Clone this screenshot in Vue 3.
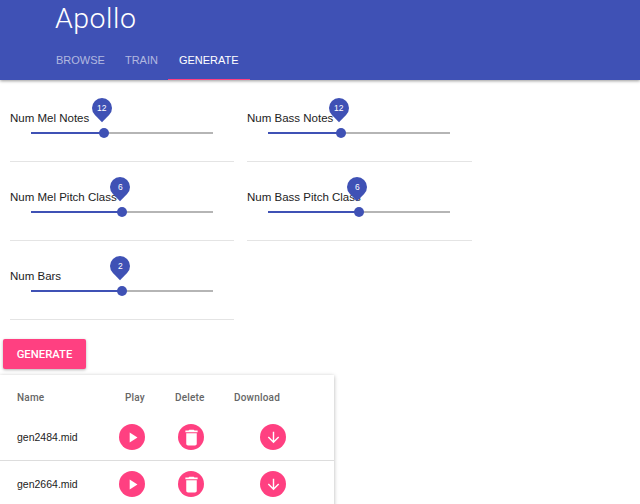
<script setup>
const sliders = [
  { label: 'Num Mel Notes', value: 12, pct: 40 },
  { label: 'Num Bass Notes', value: 12, pct: 40 },
  { label: 'Num Mel Pitch Class', value: 6, pct: 50 },
  { label: 'Num Bass Pitch Class', value: 6, pct: 50 },
  { label: 'Num Bars', value: 2, pct: 50 },
]
const tabs = [
  { name: 'BROWSE', active: false },
  { name: 'TRAIN', active: false },
  { name: 'GENERATE', active: true },
]
const files = ['gen2484.mid', 'gen2664.mid']
</script>

<template>
  <div class="page">
    <header class="bar">
      <h1 class="title">Apollo</h1>
      <nav class="tabs">
        <span v-for="t in tabs" :key="t.name" class="tab" :class="{ active: t.active }">{{ t.name }}</span>
      </nav>
    </header>

    <section class="grid">
      <div v-for="s in sliders" :key="s.label" class="cell">
        <div class="label">{{ s.label }}</div>
        <div class="track">
          <div class="fill" :style="{ width: s.pct + '%' }"></div>
          <div class="thumb" :style="{ left: s.pct + '%' }"></div>
          <div class="pin" :style="{ left: s.pct + '%' }"><span class="pin-text">{{ s.value }}</span></div>
        </div>
      </div>
    </section>

    <button class="generate">GENERATE</button>

    <section class="card">
      <div class="row head">
        <span class="c-name">Name</span>
        <span class="c-play">Play</span>
        <span class="c-del">Delete</span>
        <span class="c-dl">Download</span>
      </div>
      <div v-for="f in files" :key="f" class="row file">
        <span class="c-name fname">{{ f }}</span>
        <span class="c-play"><span class="fab">
          <svg viewBox="0 0 24 24" class="ico"><path d="M8 5v14l11-7z" /></svg>
        </span></span>
        <span class="c-del"><span class="fab">
          <svg viewBox="0 0 24 24" class="ico big"><path d="M6 19c0 1.1.9 2 2 2h8c1.1 0 2-.9 2-2V7H6v12zM19 4h-3.5l-1-1h-5l-1 1H5v2h14V4z" /></svg>
        </span></span>
        <span class="c-dl"><span class="fab">
          <svg viewBox="0 0 24 24" class="ico"><path d="M20 12l-1.41-1.41L13 16.17V4h-2v12.17l-5.58-5.59L4 12l8 8 8-8z" /></svg>
        </span></span>
      </div>
    </section>
  </div>
</template>

<style>
html, body { margin: 0; background: #fff; overflow: hidden; }
</style>

<style scoped>
.page {
  width: 640px;
  height: 504px;
  overflow: hidden;
  font-family: "Liberation Sans", Arial, sans-serif;
  color: #222;
}
.bar {
  height: 80px;
  box-sizing: border-box;
  background: #3f51b5;
  padding-left: 55px;
  box-shadow: 0 1px 3px rgba(0, 0, 0, 0.4);
  display: flex;
  flex-direction: column;
}
.title {
  margin: 0;
  height: 40px;
  font-family: Roboto, "Liberation Sans", sans-serif;
  font-size: 28.5px;
  font-weight: 300;
  line-height: 38px;
  color: #fff;
  letter-spacing: 0.5px;
}
.tabs {
  display: flex;
  margin-left: -9px;
  height: 40px;
}
.tab {
  padding: 0 10px;
  height: 40px;
  line-height: 41px;
  box-sizing: border-box;
  font-size: 11px;
  color: rgba(255, 255, 255, 0.6);
}
.tab.active {
  color: #fff;
  padding: 0 11px;
  border-bottom: 1px solid #ff4081;
}
.grid {
  display: grid;
  grid-template-columns: 224px 225px;
  column-gap: 13px;
  margin-left: 10px;
  padding-top: 3px;
}
.cell {
  height: 79px;
  box-sizing: border-box;
  border-bottom: 1px solid #e4e4e4;
  padding-top: 28px;
}
.label {
  font-size: 11.5px;
  line-height: 14px;
  color: #222;
}
.track {
  position: relative;
  margin: 7px 0 0 21px;
  width: 182px;
  height: 2px;
  background: #b5b5b5;
}
.fill {
  height: 2px;
  background: #3f51b5;
}
.thumb {
  position: absolute;
  top: -4px;
  width: 10px;
  height: 10px;
  margin-left: -5px;
  border-radius: 50%;
  background: #3f51b5;
}
.pin {
  position: absolute;
  top: -34px;
  width: 20px;
  height: 20px;
  margin-left: -12px;
  border-radius: 50% 50% 0 50%;
  background: #3f51b5;
  transform: rotate(45deg);
  display: flex;
  align-items: center;
  justify-content: center;
}
.pin-text {
  transform: rotate(-45deg);
  font-size: 8.5px;
  color: #fff;
}
.generate {
  display: block;
  margin: 19px 0 0 3px;
  width: 83px;
  height: 30px;
  border: 0;
  border-radius: 2px;
  background: #ff4081;
  color: #fff;
  font-family: Roboto, "Liberation Sans", sans-serif;
  font-size: 11.3px;
  font-weight: 500;
  padding: 0;
  box-shadow: 0 1px 3px rgba(0, 0, 0, 0.3);
}
.card {
  margin-top: 6px;
  width: 334px;
  height: 140px;
  background: #fff;
  box-shadow: 0 1px 4px rgba(0, 0, 0, 0.3);
}
.row {
  display: flex;
  align-items: center;
  box-sizing: border-box;
}
.head {
  height: 39px;
  padding-top: 5px;
  font-family: Roboto, "Liberation Sans", sans-serif;
  font-size: 10px;
  font-weight: 500;
  letter-spacing: 0.2px;
  color: #666;
}
.file {
  height: 47px;
  font-size: 10.5px;
  color: #222;
  border-bottom: 1px solid #ddd;
}
.file:last-child { border-bottom-color: transparent; }
.c-name { width: 100px; margin-left: 17px; }
.c-play { width: 50px; margin-left: 8px; }
.c-del { width: 59px; }
.file .c-play { margin-left: 2px; width: 59px; }
.file .c-del { width: 82px; }
.fab {
  display: flex;
  width: 26px;
  height: 26px;
  border-radius: 50%;
  background: #ff4081;
  align-items: center;
  justify-content: center;
}
.ico { width: 17px; height: 17px; fill: #fff; }
.ico.big { width: 21px; height: 21px; }
</style>
